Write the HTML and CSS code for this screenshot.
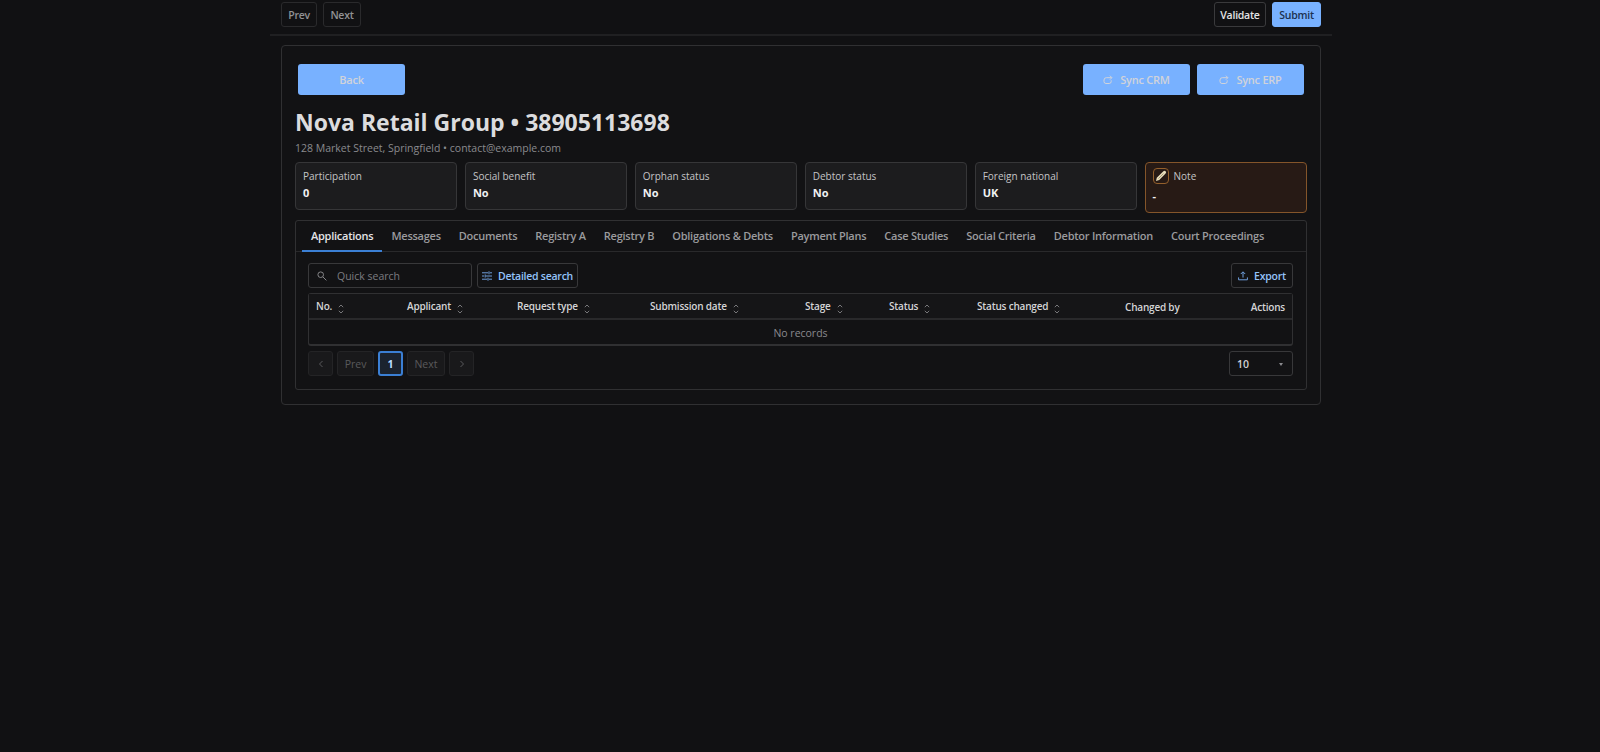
FILE: index.html
```html
<!DOCTYPE html>
<html lang="en">
<head>
    <meta charset="UTF-8">
    <meta name="viewport" content="width=device-width, initial-scale=1.0">
    <title>Nova Retail Group</title>
    <link rel="stylesheet" href="styles.css">
</head>
<body>
    <div class="page">
        <header class="topbar">
            <div class="btn-group">
                <button class="btn btn-muted btn-prev">Prev</button>
                <button class="btn btn-muted btn-next">Next</button>
            </div>
            <div class="btn-group">
                <button class="btn btn-validate">Validate</button>
                <button class="btn btn-submit">Submit</button>
            </div>
        </header>

        <main class="card">
            <div class="card-actions">
                <button class="btn-action">Back</button>
                <div class="sync-group">
                    <button class="btn-action">
                        <svg class="sync-icon" viewBox="0 0 10 10"><path d="M8.2 5.3v1.2a2 2 0 0 1-2 2H3a2 2 0 0 1-2-2V5a2.3 2.3 0 0 1 2.3-2.3h5.4M6.9.7l2 2-2 2"/></svg>
                        Sync CRM
                    </button>
                    <button class="btn-action">
                        <svg class="sync-icon" viewBox="0 0 10 10"><path d="M8.2 5.3v1.2a2 2 0 0 1-2 2H3a2 2 0 0 1-2-2V5a2.3 2.3 0 0 1 2.3-2.3h5.4M6.9.7l2 2-2 2"/></svg>
                        Sync ERP
                    </button>
                </div>
            </div>

            <h1 class="title">Nova Retail Group • 38905113698</h1>
            <p class="subtitle">128 Market Street, Springfield • contact@example.com</p>

            <!-- Summary tiles -->
            <section class="stats">
                <div class="stat">
                    <div class="stat-label">Participation</div>
                    <div class="stat-value">0</div>
                </div>
                <div class="stat">
                    <div class="stat-label">Social benefit</div>
                    <div class="stat-value">No</div>
                </div>
                <div class="stat">
                    <div class="stat-label">Orphan status</div>
                    <div class="stat-value">No</div>
                </div>
                <div class="stat">
                    <div class="stat-label">Debtor status</div>
                    <div class="stat-value">No</div>
                </div>
                <div class="stat">
                    <div class="stat-label">Foreign national</div>
                    <div class="stat-value">UK</div>
                </div>
                <div class="stat stat-note">
                    <div class="stat-label">
                        <span class="note-edit">
                            <svg viewBox="0 0 12 12"><path class="pen-body" d="M1 11l.8-3.2L8.4 1.2a1.5 1.5 0 0 1 2.2 2.2L4.2 10.1z"/><path class="pen-line" d="M3.4 8.6l5-5"/></svg>
                        </span>
                        Note
                    </div>
                    <div class="stat-value">-</div>
                </div>
            </section>

            <section class="panel">
                <nav class="tabs">
                    <a class="tab active">Applications</a>
                    <a class="tab">Messages</a>
                    <a class="tab">Documents</a>
                    <a class="tab">Registry A</a>
                    <a class="tab">Registry B</a>
                    <a class="tab">Obligations &amp; Debts</a>
                    <a class="tab">Payment Plans</a>
                    <a class="tab">Case Studies</a>
                    <a class="tab">Social Criteria</a>
                    <a class="tab">Debtor Information</a>
                    <a class="tab">Court Proceedings</a>
                </nav>

                <div class="panel-body">
                    <div class="toolbar">
                        <label class="search">
                            <svg viewBox="0 0 10 10"><circle cx="3.7" cy="3.7" r="2.8"/><path d="M5.9 5.9l3.5 3.5"/></svg>
                            <input type="text" placeholder="Quick search">
                        </label>
                        <button class="btn btn-link btn-detail">
                            <svg viewBox="0 0 10 10"><path d="M0 1.8h6M8 1.8h2M7 .3v3M0 5h2M4 5h6M3.2 3.5v3M0 8.2h5M7 8.2h3M6 6.7v3"/></svg>
                            Detailed search
                        </button>
                        <button class="btn btn-link btn-export">
                            <svg viewBox="0 0 10 10"><path d="M5 6.6V1M2.8 3L5 .8 7.2 3M.6 6.4v2.4h8.8V6.4"/></svg>
                            Export
                        </button>
                    </div>

                    <table class="grid">
                        <colgroup>
                            <col class="c-no"><col class="c-applicant"><col class="c-type"><col class="c-date">
                            <col class="c-stage"><col class="c-status"><col class="c-changed"><col class="c-by"><col>
                        </colgroup>
                        <thead>
                            <tr>
                                <th>No.<svg class="sort" viewBox="0 0 6 10"><path d="M.8 3.2L3 1l2.2 2.2M.8 6.8L3 9l2.2-2.2"/></svg></th>
                                <th>Applicant<svg class="sort" viewBox="0 0 6 10"><path d="M.8 3.2L3 1l2.2 2.2M.8 6.8L3 9l2.2-2.2"/></svg></th>
                                <th>Request type<svg class="sort" viewBox="0 0 6 10"><path d="M.8 3.2L3 1l2.2 2.2M.8 6.8L3 9l2.2-2.2"/></svg></th>
                                <th>Submission date<svg class="sort" viewBox="0 0 6 10"><path d="M.8 3.2L3 1l2.2 2.2M.8 6.8L3 9l2.2-2.2"/></svg></th>
                                <th>Stage<svg class="sort" viewBox="0 0 6 10"><path d="M.8 3.2L3 1l2.2 2.2M.8 6.8L3 9l2.2-2.2"/></svg></th>
                                <th>Status<svg class="sort" viewBox="0 0 6 10"><path d="M.8 3.2L3 1l2.2 2.2M.8 6.8L3 9l2.2-2.2"/></svg></th>
                                <th>Status changed<svg class="sort" viewBox="0 0 6 10"><path d="M.8 3.2L3 1l2.2 2.2M.8 6.8L3 9l2.2-2.2"/></svg></th>
                                <th class="plain">Changed by</th>
                                <th class="plain right">Actions</th>
                            </tr>
                        </thead>
                        <tbody>
                            <tr>
                                <td colspan="9">No records</td>
                            </tr>
                        </tbody>
                    </table>

                    <div class="pager">
                        <button class="page-btn"><svg viewBox="0 0 6 8"><path d="M4.5 1L1.5 4l3 3"/></svg></button>
                        <button class="page-btn page-prev">Prev</button>
                        <button class="page-btn current">1</button>
                        <button class="page-btn page-next">Next</button>
                        <button class="page-btn"><svg viewBox="0 0 6 8"><path d="M1.5 1l3 3-3 3"/></svg></button>
                        <div class="page-size">10<span class="caret"></span></div>
                    </div>
                </div>
            </section>
        </main>
    </div>
</body>
</html>
```
FILE: styles.css
```css
* {
    margin: 0;
    padding: 0;
    box-sizing: border-box;
}

:root {
    --background: #111113;
    --surface: #1c1c1e;
    --border: #303032;
    --text: #e4e4e6;
    --muted: #8a8a8e;
    --primary: #78b1ff;
    --accent: #3b7fd4;
}

body {
    font-family: 'Segoe UI', 'Open Sans', 'Noto Sans', sans-serif;
    font-size: 10.5px;
    background: var(--background);
    color: var(--text);
}

button,
input {
    font: inherit;
    color: inherit;
    letter-spacing: inherit;
}

svg {
    flex: none;
    fill: none;
    stroke: currentColor;
}

.page {
    width: 1062px;
    margin: 0 0 0 270px;
}

/* Top bar */
.topbar {
    display: flex;
    justify-content: space-between;
    height: 36px;
    padding: 2px 11px 0;
    border-bottom: 2px solid #202022;
}

.btn-group {
    display: flex;
    gap: 6px;
}

.btn {
    display: flex;
    align-items: center;
    justify-content: center;
    height: 25px;
    border: 1px solid var(--border);
    border-radius: 3px;
    background: transparent;
    font-weight: 600;
    letter-spacing: -0.25px;
    white-space: nowrap;
}

.btn-muted {
    color: #929294;
    border-color: #2a2a2c;
}

.btn-prev {
    width: 36px;
}

.btn-next {
    width: 38px;
}

.btn-validate {
    width: 52px;
    border-color: #3a3a3c;
}

.btn-submit {
    width: 49px;
    border-color: var(--primary);
    background: var(--primary);
    color: #1c3150;
}

/* Main card */
.card {
    width: 1040px;
    height: 360px;
    margin: 9px 0 0 11px;
    padding: 18px 13px 0;
    border: 1px solid var(--border);
    border-radius: 4px;
    background: #121214;
}

.card-actions {
    display: flex;
    justify-content: space-between;
    padding: 0 3px;
}

.sync-group {
    display: flex;
    gap: 7px;
}

.btn-action {
    display: flex;
    align-items: center;
    justify-content: center;
    width: 107px;
    height: 31px;
    border: 0;
    border-radius: 3px;
    background: var(--primary);
    color: #d0d3da;
    font-size: 11px;
    font-weight: 600;
    letter-spacing: -0.25px;
}

.sync-icon {
    width: 10px;
    height: 10px;
    margin-right: 7px;
}

.title {
    margin-top: 11px;
    font-size: 23px;
    font-weight: 700;
    line-height: 32px;
    color: #dcdcde;
    white-space: nowrap;
}

.subtitle {
    margin-top: 2px;
    line-height: 16px;
    color: var(--muted);
}

/* Stats */
.stats {
    display: grid;
    grid-template-columns: repeat(6, 1fr);
    align-items: start;
    gap: 7.5px;
    height: 51px;
    margin-top: 6px;
}

.stat {
    height: 48px;
    padding: 6px 7px;
    border: 1px solid #363638;
    border-radius: 4px;
    background: var(--surface);
}

.stat-label {
    display: flex;
    align-items: center;
    height: 14px;
    font-size: 10px;
    color: #c4c4c6;
}

.stat-value {
    margin-top: 2px;
    font-size: 11px;
    font-weight: 700;
    line-height: 16px;
    color: #f0f0f2;
}

.stat-note {
    height: 51px;
    border-color: #84552a;
    background: #271a15;
}

.stat-note .stat-value {
    margin-top: 5px;
}

.note-edit {
    display: flex;
    align-items: center;
    justify-content: center;
    width: 16px;
    height: 16px;
    margin-right: 5px;
    border: 1px solid #94602c;
    border-radius: 4px;
}

.note-edit svg {
    width: 12px;
    height: 12px;
}

.pen-body {
    fill: #e9dfbe;
    stroke: none;
}

.pen-line {
    stroke: #8d7c58;
    stroke-width: 0.7;
}

/* Tabs panel */
.panel {
    height: 170px;
    margin-top: 7px;
    border: 1px solid var(--border);
    border-radius: 3px;
}

.tabs {
    display: flex;
    height: 31px;
    padding-left: 6px;
    border-bottom: 1px solid #29292b;
}

.tab {
    height: 31px;
    padding: 0 9px;
    font-size: 11px;
    font-weight: 600;
    line-height: 29px;
    letter-spacing: -0.25px;
    color: #9b9b9e;
    white-space: nowrap;
}

.tab.active {
    color: var(--text);
    border-bottom: 2px solid var(--accent);
}

.panel-body {
    padding: 11px 13px 0 12px;
}

.toolbar {
    display: flex;
    gap: 5px;
    margin-bottom: 5px;
}

.search {
    display: flex;
    align-items: center;
    width: 164px;
    height: 25px;
    padding-left: 8px;
    border: 1px solid #38383a;
    border-radius: 3px;
    color: #858588;
}

.search svg {
    width: 10px;
    height: 10px;
    margin-right: 10px;
}

.search input {
    width: 120px;
    padding-top: 1px;
    border: 0;
    outline: 0;
    background: transparent;
}

.search input::placeholder {
    color: #7c7c80;
}

.btn-link {
    color: #94c3fa;
    border-color: #38383a;
}

.btn-link svg {
    width: 10px;
    height: 10px;
    margin-right: 6px;
    color: #6f9fdc;
}

.btn-detail {
    width: 101px;
}

.btn-export {
    width: 62px;
    margin-left: auto;
}

/* Table */
.grid {
    width: 100%;
    height: 53px;
    table-layout: fixed;
    border: 1px solid var(--border);
    border-bottom-width: 2px;
    border-radius: 3px;
    border-spacing: 0;
}

.grid th {
    height: 26px;
    padding: 0 7px;
    border-bottom: 2px solid #29292b;
    background: #151517;
    font-size: 10px;
    font-weight: 600;
    line-height: 14px;
    letter-spacing: -0.2px;
    text-align: left;
    white-space: nowrap;
    color: #d4d4d6;
}

.grid th.right {
    text-align: right;
}

.grid th.plain {
    padding-top: 1px;
}

.grid td {
    padding: 2px 0 0;
    line-height: 14px;
    text-align: center;
    color: var(--muted);
}

.sort {
    width: 6px;
    height: 10px;
    margin-left: 6px;
    vertical-align: -4px;
    color: #77777a;
}

.c-no { width: 91px; }
.c-applicant { width: 110px; }
.c-type { width: 133px; }
.c-date { width: 155px; }
.c-stage { width: 84px; }
.c-status { width: 88px; }
.c-changed { width: 148px; }
.c-by { width: 100px; }

/* Pagination */
.pager {
    display: flex;
    gap: 4px;
    margin-top: 5px;
}

.page-btn {
    display: flex;
    align-items: center;
    justify-content: center;
    width: 25px;
    height: 25px;
    border: 1px solid #242426;
    border-radius: 3px;
    background: #19191b;
    color: #59595c;
}

.page-btn svg {
    width: 6px;
    height: 8px;
}

.page-prev {
    width: 37px;
}

.page-next {
    width: 38px;
}

.page-btn.current {
    border: 2px solid var(--accent);
    background: #1b232f;
    color: #b9dcff;
    font-weight: 700;
}

.page-size {
    display: flex;
    align-items: center;
    justify-content: space-between;
    width: 64px;
    height: 25px;
    margin-left: auto;
    padding: 1px 9px 0 7px;
    border: 1px solid #38383a;
    border-radius: 3px;
    font-weight: 600;
    color: #d0d0d2;
}

.caret {
    border: 2px solid transparent;
    border-top: 3px solid #8a8a8e;
    border-bottom: 0;
}
```
